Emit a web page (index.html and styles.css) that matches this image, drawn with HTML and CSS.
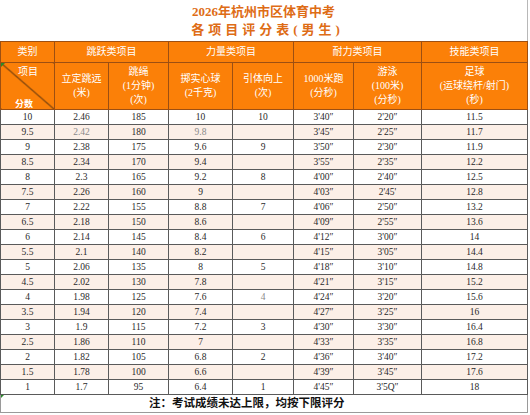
FILE: index.html
```html
<!DOCTYPE html>
<html lang="zh">
<head>
<meta charset="utf-8">
<title>2026年杭州市区体育中考各项目评分表(男生)</title>
<link rel="stylesheet" href="styles.css">
</head>
<body>
<div class="sheet">
  <div class="title">
    <div class="title-1">2026年杭州市区体育中考</div>
    <div class="title-2">各项目评分表(男生)</div>
  </div>
  <table class="grid">
    <colgroup>
      <col class="c1"><col class="c2"><col class="c3"><col class="c4"><col class="c5"><col class="c6"><col class="c7"><col class="c8">
    </colgroup>
    <thead>
      <tr class="h1">
        <th>类别</th>
        <th colspan="2">跳跃类项目</th>
        <th colspan="2">力量类项目</th>
        <th colspan="2">耐力类项目</th>
        <th>技能类项目</th>
      </tr>
      <tr class="h2">
        <th class="diag"><div class="diag-box"><span class="d-top">项目</span><span class="d-bot">分数</span></div></th>
        <th><div class="hl">立定跳远</div><div class="hl">(米)</div></th>
        <th><div class="hl">跳绳</div><div class="hl">(1分钟)</div><div class="hl">(次)</div></th>
        <th><div class="hl">掷实心球</div><div class="hl">(2千克)</div></th>
        <th><div class="hl">引体向上</div><div class="hl">(次)</div></th>
        <th><div class="hl">1000米跑</div><div class="hl">(分秒)</div></th>
        <th><div class="hl">游泳</div><div class="hl">(100米)</div><div class="hl">(分秒)</div></th>
        <th><div class="hl">足球</div><div class="hl">(运球绕杆/射门)</div><div class="hl">(秒)</div></th>
      </tr>
    </thead>
    <tbody>
      <tr><td>10</td><td>2.46</td><td>185</td><td>10</td><td>10</td><td>3'40″</td><td>2'20″</td><td>11.5</td></tr>
      <tr class="alt"><td>9.5</td><td class="dim">2.42</td><td>180</td><td class="dim">9.8</td><td></td><td>3'45″</td><td>2'25″</td><td>11.7</td></tr>
      <tr><td>9</td><td>2.38</td><td>175</td><td>9.6</td><td>9</td><td>3'50″</td><td>2'30″</td><td>11.9</td></tr>
      <tr class="alt"><td>8.5</td><td>2.34</td><td>170</td><td>9.4</td><td></td><td>3'55″</td><td>2'35″</td><td>12.2</td></tr>
      <tr><td>8</td><td>2.3</td><td>165</td><td>9.2</td><td>8</td><td>4'00″</td><td>2'40″</td><td>12.5</td></tr>
      <tr class="alt"><td>7.5</td><td>2.26</td><td>160</td><td>9</td><td></td><td>4'03″</td><td>2'45'</td><td>12.8</td></tr>
      <tr><td>7</td><td>2.22</td><td>155</td><td>8.8</td><td>7</td><td>4'06″</td><td>2'50″</td><td>13.2</td></tr>
      <tr class="alt"><td>6.5</td><td>2.18</td><td>150</td><td>8.6</td><td></td><td>4'09″</td><td>2'55″</td><td>13.6</td></tr>
      <tr><td>6</td><td>2.14</td><td>145</td><td>8.4</td><td>6</td><td>4'12″</td><td>3'00″</td><td>14</td></tr>
      <tr class="alt"><td>5.5</td><td>2.1</td><td>140</td><td>8.2</td><td></td><td>4'15″</td><td>3'05″</td><td>14.4</td></tr>
      <tr><td>5</td><td>2.06</td><td>135</td><td>8</td><td>5</td><td>4'18″</td><td>3'10″</td><td>14.8</td></tr>
      <tr class="alt"><td>4.5</td><td>2.02</td><td>130</td><td>7.8</td><td></td><td>4'21″</td><td>3'15″</td><td>15.2</td></tr>
      <tr><td>4</td><td>1.98</td><td>125</td><td>7.6</td><td class="dim">4</td><td>4'24″</td><td>3'20″</td><td>15.6</td></tr>
      <tr class="alt"><td>3.5</td><td>1.94</td><td>120</td><td>7.4</td><td></td><td>4'27″</td><td>3'25″</td><td>16</td></tr>
      <tr><td>3</td><td>1.9</td><td>115</td><td>7.2</td><td>3</td><td>4'30″</td><td>3'30″</td><td>16.4</td></tr>
      <tr class="alt"><td>2.5</td><td>1.86</td><td>110</td><td>7</td><td></td><td>4'33″</td><td>3'35″</td><td>16.8</td></tr>
      <tr><td>2</td><td>1.82</td><td>105</td><td>6.8</td><td>2</td><td>4'36″</td><td>3'40″</td><td>17.2</td></tr>
      <tr class="alt"><td>1.5</td><td>1.78</td><td>100</td><td>6.6</td><td></td><td>4'39″</td><td>3'45″</td><td>17.6</td></tr>
      <tr><td>1</td><td>1.7</td><td>95</td><td>6.4</td><td>1</td><td>4'45″</td><td>3'5Q″</td><td>18</td></tr>
      <tr class="note"><td colspan="8"><span class="mark"></span>注：考试成绩未达上限，均按下限评分</td></tr>
    </tbody>
  </table>
</div>
</body>
</html>
```
FILE: styles.css
```css
html, body {
  margin: 0;
  padding: 0;
  background: #ffffff;
}
body {
  font-family: "Liberation Serif", "Noto Sans CJK SC", serif;
  color: #2a2a2a;
}
.sheet {
  width: 527px;
  border-right: 1px solid #b8b8b8;
}
.title {
  height: 41px;
  box-sizing: border-box;
  padding-top: 4px;
  text-align: center;
  color: #de6c16;
  font-weight: bold;
  font-family: "Liberation Serif", "Noto Sans CJK SC", serif;
}
.title-1 {
  font-size: 13px;
  line-height: 16px;
}
.title-2 {
  font-size: 13px;
  line-height: 19px;
  letter-spacing: 4px;
  padding-left: 8px;
}
.grid {
  width: 527px;
  table-layout: fixed;
  border-collapse: collapse;
  border-spacing: 0;
}
.c1 { width: 54px; }
.c2 { width: 54px; }
.c3 { width: 60px; }
.c4 { width: 64px; }
.c5 { width: 61px; }
.c6 { width: 60px; }
.c7 { width: 68px; }
.c8 { width: 106px; }

.grid th {
  background: #fb8008;
  color: #ffffff;
  font-weight: normal;
  font-size: 10px;
  border: 1px solid #9c4f12;
  padding: 0;
  text-align: center;
  vertical-align: middle;
}
.h1 th {
  height: 20px;
  line-height: 20px;
}
.h2 th {
  height: 46px;
}
.hl {
  line-height: 14px;
  white-space: nowrap;
}
.grid th.diag {
  position: relative;
  background-color: #fb8008;
  background-image: linear-gradient(to top right, rgba(0,0,0,0) calc(50% - 0.8px), #3a2410 50%, rgba(0,0,0,0) calc(50% + 0.8px));
}
.grid th.diag::before {
  content: "";
  position: absolute;
  left: 0;
  top: 0;
  border-top: 4px solid #2a8a2a;
  border-right: 4px solid transparent;
}
.diag-box {
  height: 46px;
  overflow: hidden;
  display: flex;
  flex-direction: column;
  justify-content: space-between;
}
.d-top {
  align-self: flex-end;
  padding-right: 16px;
  line-height: 16px;
  margin-top: 1px;
}
.d-bot {
  align-self: flex-start;
  padding-left: 14px;
  font-size: 9px;
  line-height: 10px;
  font-weight: bold;
}
.grid td {
  height: 14px;
  line-height: 14px;
  padding: 0;
  border: 1px solid #5a5a5a;
  text-align: center;
  vertical-align: middle;
  font-size: 9.5px;
  color: #2a2a2a;
  white-space: nowrap;
}
.grid tr.alt td {
  background: #fcefe7;
}
.grid td.dim {
  color: #8a8a8a;
}
.note td {
  position: relative;
  height: 17px;
  line-height: 17px;
  text-align: left;
  padding-left: 148px;
  font-size: 11.5px;
  font-weight: bold;
  color: #111111;
  background: #ffffff;
  border-color: #9a9a9a;
}
.mark {
  position: absolute;
  left: 0;
  top: 0;
  border-top: 3px solid #2a8a2a;
  border-right: 3px solid transparent;
}
```
